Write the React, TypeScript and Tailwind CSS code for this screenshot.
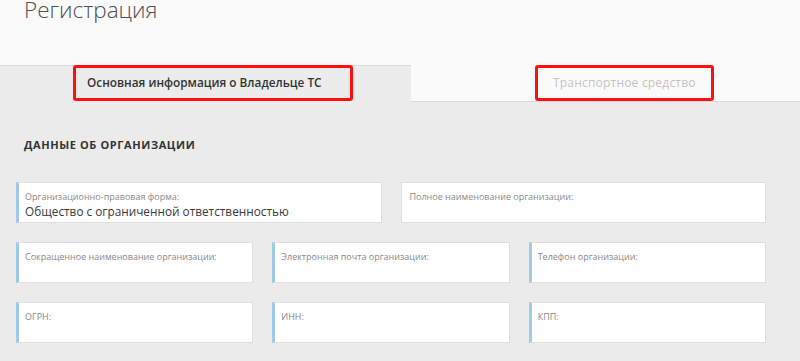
const font = { fontFamily: '"Open Sans", "Noto Sans", sans-serif' };

type FieldProps = { label: string; value?: string; accent?: boolean };

function Field({ label, value, accent = true }: FieldProps) {
  return (
    <div
      className={`h-[41px] bg-white border border-[#dfdfdf] pt-[8px] ${
        accent ? "border-l-[3px] border-l-[#9ecbe7] pl-[6px]" : "pl-[8px]"
      }`}
    >
      <div className="text-[9px] leading-[12px] text-[#8a8a8a]">{label}</div>
      {value && <div className="text-[11.8px] leading-[17px] text-[#3a3a3a]">{value}</div>}
    </div>
  );
}

export default function App() {
  return (
    <div className="w-[800px] h-[361px] overflow-hidden bg-[#ebebeb]" style={font}>
      {/* header */}
      <div className="h-[65px] bg-[#fafafa] pl-[24px] flex flex-col overflow-hidden">
        <h1 className="text-[22.5px] leading-[26px] -mt-[3px] font-light text-[#505050]">
          Регистрация
        </h1>
      </div>

      {/* tabs */}
      <div className="flex h-[37px]">
        <div className="w-[411px] bg-[#ececec] border-t border-[#dcdcdc] pl-[73px]">
          <div className="w-[280px] h-[36px] -mt-px border-[3px] border-[#ff1010] rounded-[3px] flex items-center pl-[11px]">
            <span className="text-[11.8px] font-semibold text-[#333]">
              Основная информация о Владельце ТС
            </span>
          </div>
        </div>
        <div className="flex-1 bg-[#fafafa] border-b border-[#d9d9d9] pl-[124px]">
          <div className="w-[179px] h-[36px] border-[3px] border-[#ff1010] rounded-[3px] flex items-center pl-[15px]">
            <span className="text-[12px] text-[#c4c4c4] tracking-[0.2px]">Транспортное средство</span>
          </div>
        </div>
      </div>

      {/* content */}
      <div className="pl-[16px] pt-[35px] w-[766px]">
        <div className="pl-[8px] text-[11px] leading-[16px] font-bold text-[#333] tracking-[0.6px]">
          ДАННЫЕ ОБ ОРГАНИЗАЦИИ
        </div>

        <div className="mt-[29px] grid grid-cols-2 gap-[19px]">
          <Field label="Организационно-правовая форма:" value="Общество с ограниченной ответственностью" />
          <Field label="Полное наименование организации:" accent={false} />
        </div>

        <div className="mt-[19px] grid grid-cols-3 gap-[19px]">
          <Field label="Сокращенное наименование организации:" />
          <Field label="Электронная почта организации:" />
          <Field label="Телефон организации:" />
          <Field label="ОГРН:" />
          <Field label="ИНН:" />
          <Field label="КПП:" />
        </div>
      </div>
    </div>
  );
}
